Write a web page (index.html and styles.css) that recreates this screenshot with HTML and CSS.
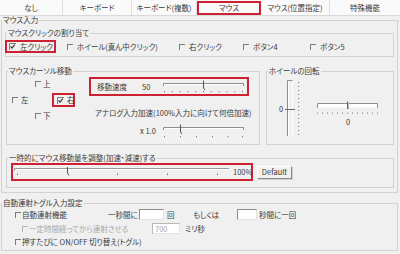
FILE: index.html
```html
<!DOCTYPE html>
<html lang="ja">
<head>
<meta charset="utf-8">
<link rel="stylesheet" href="styles.css">
</head>
<body>
<div class="tabs">
  <div class="tab t1">なし</div>
  <div class="tab t2">キーボード</div>
  <div class="tab t3">キーボード(複数)</div>
  <div class="tab t4 sel">マウス</div>
  <div class="tab t5">マウス(位置指定)</div>
  <div class="tab t6">特殊機能</div>
</div>

<fieldset class="fs outer">
  <legend>マウス入力</legend>

  <fieldset class="fs click">
    <legend>マウスクリックの割り当て</legend>
    <div class="clickrow">
      <div class="c1"><span class="item hl lclick"><svg class="cbx" width="7" height="7" viewBox="0 0 7 7"><path d="M0.5 7V0.5H7" stroke="#7a7a7a" fill="none"/><path d="M1.6 3.4L3 5.2L5.8 1.6" stroke="#333" stroke-width="1.1" fill="none"/></svg>左クリック</span></div>
      <div class="c2"><span class="item"><span class="cb"></span>ホイール(真ん中クリック)</span></div>
      <div class="c3"><span class="item"><span class="cb"></span>右クリック</span></div>
      <div class="c4"><span class="item"><span class="cb"></span>ボタン4</span></div>
      <div class="c5"><span class="item"><span class="cb"></span>ボタン5</span></div>
    </div>
  </fieldset>

  <div class="midrow">
    <fieldset class="fs cursor">
      <legend>マウスカーソル移動</legend>
      <div class="cursorbody">
        <div class="dirs">
          <div class="item dir-up"><span class="cb"></span>上</div>
          <div class="dir-mid">
            <div class="item dir-left"><span class="cb"></span>左</div>
            <div class="item hl dir-right"><svg class="cbx" width="7" height="7" viewBox="0 0 7 7"><path d="M0.5 7V0.5H7" stroke="#7a7a7a" fill="none"/><path d="M1.6 3.4L3 5.2L5.8 1.6" stroke="#333" stroke-width="1.1" fill="none"/></svg>右</div>
          </div>
          <div class="item dir-down"><span class="cb"></span>下</div>
        </div>
        <div class="speedcol">
          <div class="hl speed">
            <span class="slbl">移動速度</span>
            <span class="sval">50</span>
            <svg width="82" height="15" viewBox="0 0 82 15">
              <path d="M0.5 7V4.5H80.5V7" stroke="#8e8e8e" fill="none"/>
              <path d="M1 5.5H80" stroke="#fff"/>
              <path d="M40.5 1.5V9L42 11" stroke="#555" fill="none"/>
              <g fill="#7a7a7a">
                <rect x="1" y="12" width="1" height="1.2"/><rect x="8.8" y="12" width="1" height="1.2"/><rect x="16.6" y="12" width="1" height="1.2"/><rect x="24.4" y="12" width="1" height="1.2"/><rect x="32.2" y="12" width="1" height="1.2"/><rect x="40" y="12" width="1" height="1.2"/><rect x="47.8" y="12" width="1" height="1.2"/><rect x="55.6" y="12" width="1" height="1.2"/><rect x="63.4" y="12" width="1" height="1.2"/><rect x="71.2" y="12" width="1" height="1.2"/><rect x="79" y="12" width="1" height="1.2"/>
              </g>
            </svg>
          </div>
          <div class="analog">アナログ入力加速(100%入力に向けて何倍加速)</div>
          <div class="accel">
            <span class="aval">x 1.0</span>
            <svg width="82" height="17" viewBox="0 0 82 17">
              <path d="M0.5 8V5.5H80.5V8" stroke="#8e8e8e" fill="none"/>
              <path d="M1 6.5H80" stroke="#fff"/>
              <path d="M17.5 2.5V10L19 12" stroke="#555" fill="none"/>
              <g fill="#7a7a7a">
                <rect x="1" y="14" width="1" height="1.2"/><rect x="17" y="14" width="1" height="1.2"/><rect x="33" y="14" width="1" height="1.2"/><rect x="49" y="14" width="1" height="1.2"/><rect x="64.5" y="14" width="1" height="1.2"/><rect x="79" y="14" width="1" height="1.2"/>
              </g>
            </svg>
          </div>
        </div>
      </div>
    </fieldset>

    <fieldset class="fs wheel">
      <legend>ホイールの回転</legend>
      <div class="wheelbody">
        <span class="wz">0</span>
        <svg class="vsl" width="18" height="60" viewBox="0 0 18 60">
          <path d="M3.5 58V2.5H8.5" stroke="#8e8e8e" fill="none"/>
          <path d="M4.5 3V58M8.5 3V58" stroke="#fff"/>
          <path d="M1 31.5H11" stroke="#666"/>
          <g fill="#8a8a8a">
            <rect x="14" y="4" width="1.2" height="1"/><rect x="14" y="8" width="1.2" height="1"/><rect x="14" y="12" width="1.2" height="1"/><rect x="14" y="16" width="1.2" height="1"/><rect x="14" y="20" width="1.2" height="1"/><rect x="14" y="24" width="1.2" height="1"/><rect x="14" y="28" width="1.2" height="1"/><rect x="14" y="32" width="1.2" height="1"/><rect x="14" y="36" width="1.2" height="1"/><rect x="14" y="40" width="1.2" height="1"/><rect x="14" y="44" width="1.2" height="1"/><rect x="14" y="48" width="1.2" height="1"/><rect x="14" y="52" width="1.2" height="1"/><rect x="14" y="56" width="1.2" height="1"/>
          </g>
        </svg>
        <div class="hwrap">
          <svg width="64" height="16" viewBox="0 0 64 16">
            <rect x="1" y="3.5" width="60" height="4" fill="#fff"/>
            <path d="M1.5 8V3.5H61.5V8" stroke="#8e8e8e" fill="none"/>
            <path d="M31.5 1.5V9" stroke="#666"/>
            <path d="M32.5 2V9" stroke="#bbb"/>
            <g fill="#8a8a8a">
              <rect x="1" y="12.5" width="1" height="1.2"/><rect x="6" y="12.5" width="1" height="1.2"/><rect x="11" y="12.5" width="1" height="1.2"/><rect x="16" y="12.5" width="1" height="1.2"/><rect x="21" y="12.5" width="1" height="1.2"/><rect x="26" y="12.5" width="1" height="1.2"/><rect x="31" y="12.5" width="1" height="1.2"/><rect x="36" y="12.5" width="1" height="1.2"/><rect x="41" y="12.5" width="1" height="1.2"/><rect x="46" y="12.5" width="1" height="1.2"/><rect x="51" y="12.5" width="1" height="1.2"/><rect x="56" y="12.5" width="1" height="1.2"/><rect x="61" y="12.5" width="1" height="1.2"/>
            </g>
          </svg>
          <span class="hz">0</span>
        </div>
      </div>
    </fieldset>
  </div>

  <fieldset class="fs temp">
    <legend>一時的にマウス移動量を調整(加速・減速)する</legend>
    <div class="temprow">
      <div class="hl tempbox">
        <svg width="218" height="14" viewBox="0 0 218 14">
          <path d="M1.5 6V3.5H216" stroke="#9a9a9a" fill="none"/>
          <path d="M2 4.5H216" stroke="#fff"/>
          <path d="M54.5 2V8L56 10.5" stroke="#555" fill="none"/>
          <g fill="#777">
            <rect x="4" y="8.5" width="1" height="1.6"/><rect x="104" y="8.5" width="1" height="1.6"/><rect x="154" y="8.5" width="1" height="1.6"/><rect x="204" y="8.5" width="1" height="1.6"/>
          </g>
        </svg>
        <span class="pct">100%</span>
      </div>
      <div class="btn">Default</div>
    </div>
  </fieldset>
</fieldset>

<fieldset class="fs auto">
  <legend>自動連射トグル入力設定</legend>
  <div class="arow r1">
    <span class="item a-cb1"><span class="cb"></span>自動連射機能</span>
    <span class="a-sec">一秒間に</span>
    <span class="inp i1"></span>
    <span class="a-kai">回</span>
    <span class="a-or">もしくは</span>
    <span class="inp i2"></span>
    <span class="a-per">秒間に一回</span>
  </div>
  <div class="arow r2 dis">
    <span class="item a-cb2"><span class="cb"></span>一定時間経ってから連射させる</span>
    <span class="inp i3">700</span>
    <span class="a-ms">ミリ秒</span>
  </div>
  <div class="arow r3">
    <span class="item a-cb1"><span class="cb"></span>押すたびに ON/OFF 切り替え(トグル)</span>
  </div>
</fieldset>
</body>
</html>
```

FILE: styles.css
```css
* { box-sizing: border-box; }
html, body { margin: 0; padding: 0; }
body {
  width: 400px;
  height: 254px;
  overflow: hidden;
  background: #f0f0f0;
  font-family: "Noto Sans CJK JP", "Noto Sans", sans-serif;
  font-size: 7.5px;
  line-height: 8px;
  color: #3a3a3a;
  font-feature-settings: "palt" 1;
}
svg { display: block; flex: none; }

/* tabs */
.tabs {
  display: flex;
  height: 16px;
  background: #fafafa;
  border-bottom: 1px solid #d9d9d9;
}
.tab {
  display: flex;
  align-items: center;
  justify-content: center;
  height: 15px;
  border-right: 1px solid #dedede;
  white-space: nowrap;
}
.t1 { width: 63px; }
.t2 { width: 69px; }
.t3 { width: 65px; }
.t4 { width: 64px; }
.t5 { width: 69px; }
.t6 { width: 70px; border-right: 0; }
.tab.sel {
  border: 2px solid #cc2233;
  height: 14px;
  margin-top: 1px;
}

/* group boxes */
.fs {
  margin: 0;
  padding: 0;
  border: 1px solid #d2d2d2;
  min-width: 0;
}
.fs > legend {
  padding: 0 1px;
  height: 8px;
  line-height: 8px;
  white-space: nowrap;
}
.outer { margin-left: 1px; width: 397px; padding-bottom: 4px; }
.click { margin: 5px 0 0 3px; width: 389px; padding-bottom: 3px; }
.click > legend, .cursor > legend, .wheel > legend, .temp > legend { margin-left: 1px; }

/* checkbox */
.cb {
  display: block;
  flex: none;
  width: 6px;
  height: 6px;
  border-top: 1px solid #7a7a7a;
  border-left: 1px solid #7a7a7a;
}
.item { display: flex; align-items: center; gap: 4px; white-space: nowrap; }
.hl { border: 2px solid #cc2233; }

/* click row */
.clickrow { display: flex; align-items: center; height: 13px; margin-top: 3px; }
.c1 { width: 62px; margin-left: -1px; }
.c2 { width: 112px; }
.c3 { width: 64px; }
.c4 { width: 67px; }
.lclick { width: 51px; height: 13px; padding-left: 2px; }

/* middle row */
.midrow { display: flex; margin-top: 10px; }
.cursor { margin-left: 4px; width: 254px; height: 78px; }
.wheel { margin-left: 6px; width: 128px; height: 78px; }
.cursorbody { display: flex; }
.dirs { width: 82px; flex: none; }
.dir-up, .dir-down { height: 10px; margin: 4px 0 0 28px; gap: 2px; }
.dir-mid { display: flex; align-items: center; height: 14px; margin-top: 4px; }
.dir-left { width: 40px; margin-left: 5px; gap: 3px; }
.dir-right { width: 23px; height: 14px; padding-left: 3px; gap: 3px; }

.speedcol { margin-top: 2px; }
.speed {
  display: flex;
  align-items: center;
  width: 160px;
  height: 19px;
  padding-left: 6px;
}
.slbl { width: 45px; }
.sval { width: 21px; }
.analog { margin: 13px 0 0 6px; white-space: nowrap; }
.accel { display: flex; align-items: center; margin-top: 5px; padding-left: 51px; }
.aval { width: 23px; }

.wheelbody { display: flex; align-items: flex-start; }
.wz { width: 5px; margin: 30px 0 0 12px; }
.vsl { margin-top: 3px; }
.hwrap {
  display: flex;
  flex-direction: column;
  align-items: center;
  width: 64px;
  margin: 25px 0 0 14px;
}
.hz { margin-top: 2px; }

/* temporary adjust */
.temp { margin: 9px 0 0 4px; width: 388px; padding-bottom: 6px; }
.temprow { display: flex; align-items: center; margin-top: 1px; }
.tempbox {
  display: flex;
  align-items: center;
  width: 242px;
  height: 18px;
  margin-left: 4px;
}
.pct { margin-left: 2px; }
.btn {
  display: flex;
  align-items: center;
  justify-content: center;
  width: 35px;
  height: 13px;
  margin-left: 4px;
  background: #f0f0f0;
  border-top: 1px solid #fff;
  border-left: 1px solid #fff;
  border-right: 1px solid #8a8a8a;
  border-bottom: 1px solid #8a8a8a;
  box-shadow: 1px 1px 0 #cfcfcf;
}

/* auto fire */
.auto { margin: 6px 0 0 1px; width: 397px; padding-bottom: 3px; }
.arow { display: flex; align-items: center; white-space: nowrap; }
.r1 { height: 11px; margin-top: 2px; }
.r2 { height: 11px; margin-top: 3px; }
.r3 { height: 10px; margin-top: 3px; }
.a-cb1 { width: 93px; margin-left: 13px; gap: 1px; }
.a-cb2 { width: 130px; margin-left: 20px; gap: 1px; }
.a-sec { width: 31px; }
.inp {
  display: flex;
  align-items: center;
  height: 11px;
  padding-left: 2px;
  background: #fff;
  border-top: 1px solid #8a8a8a;
  border-left: 1px solid #8a8a8a;
  border-right: 1px solid #e4e4e4;
  border-bottom: 1px solid #e4e4e4;
}
.i1 { width: 25px; }
.i2 { width: 20px; }
.i3 { width: 28px; }
.a-kai { width: 26px; margin-left: 3px; }
.a-or { width: 44px; }
.a-per { margin-left: 2px; }
.a-ms { margin-left: 5px; }
.dis .item { color: #a9a9a9; }
.dis .cb { border-color: #b5b5b5; }
.dis .inp { color: #a9a9a9; border-top-color: #b8b8b8; border-left-color: #b8b8b8; }
```
